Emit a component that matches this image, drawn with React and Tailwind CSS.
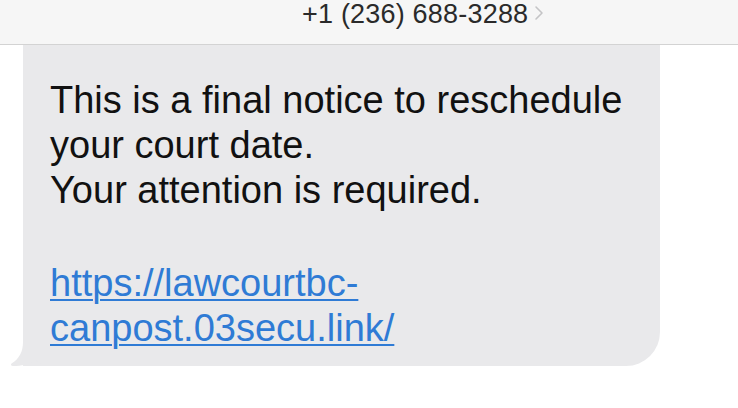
export default function App() {
  return (
    <div
      className="w-[738px] h-[408px] bg-white overflow-hidden flex flex-col"
      style={{ fontFamily: '"Liberation Sans", Arial, sans-serif' }}
    >
      {/* header (top is cut off) */}
      <div className="h-[45px] shrink-0 bg-[#f6f6f6] border-b border-[#d3d3d3] flex items-start pl-[302px] pt-[1px]">
        <span className="text-[27px] leading-[26px] tracking-[0.2px] text-[#2a2a2a]">
          +1 (236) 688-3288
        </span>
        <svg width="10" height="16" viewBox="0 0 10 16" className="ml-[6px] mt-[4px]">
          <path d="M2 2 L8 8 L2 14" fill="none" stroke="#c4c4c6" strokeWidth="1.6" strokeLinecap="round" strokeLinejoin="round" />
        </svg>
      </div>

      {/* message */}
      <div className="pl-[23px]">
        <div className="relative w-[637px] bg-[#e9e9eb] rounded-br-[34px] pt-[33px] pb-[15px] pl-[27px] text-[38px] leading-[45px] text-[#111]">
          <div>This is a final notice to reschedule</div>
          <div>your court date.</div>
          <div>Your attention is required.</div>
          <div className="h-[48px]" />
          <div className="text-[#2f7bd5] underline decoration-[2px] underline-offset-[3px]">https://lawcourtbc-</div>
          <div className="text-[#2f7bd5] underline decoration-[2px] underline-offset-[3px]">canpost.03secu.link/</div>

          {/* tail */}
          <svg width="40" height="40" viewBox="0 0 40 40" className="absolute left-[-13px] bottom-0">
            <path
              d="M13 0 L13 16 C13 26 9 33 1.5 37.5 C0.5 38.5 1 40 3 40 C12 40 19 38 25 34 C28 36 32 39 40 40 L40 0 Z"
              fill="#e9e9eb"
            />
          </svg>
        </div>
      </div>
    </div>
  );
}
